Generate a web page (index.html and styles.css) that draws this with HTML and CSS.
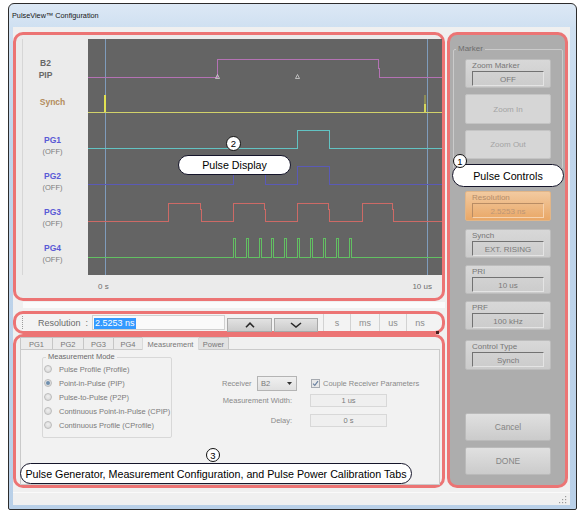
FILE: index.html
```html
<!DOCTYPE html>
<html lang="en">
<head>
<meta charset="utf-8">
<title>PulseView Configuration</title>
<link rel="stylesheet" href="styles.css">
</head>
<body>
<div class="window">
  <div class="titlebar">PulseView™ Configuration</div>
  <div class="client">
    <div class="main">
      <div class="left-col">
        <section class="box box-display">
          <div class="labels">
            <div class="lbl lbl-b2"><span>B2</span><span>PIP</span></div>
            <div class="lbl lbl-synch"><span>Synch</span></div>
            <div class="lbl lbl-pg lbl-pg1"><span>PG1</span><span class="off">(OFF)</span></div>
            <div class="lbl lbl-pg"><span>PG2</span><span class="off">(OFF)</span></div>
            <div class="lbl lbl-pg"><span>PG3</span><span class="off">(OFF)</span></div>
            <div class="lbl lbl-pg"><span>PG4</span><span class="off">(OFF)</span></div>
          </div>
          <svg class="chart" width="354" height="236" viewBox="0 0 354 236" shape-rendering="crispEdges">
            <rect width="354" height="236" fill="#646464"/>
            <line x1="17.5" y1="0" x2="17.5" y2="236" stroke="#7f9cbc"/>
            <line x1="339.5" y1="0" x2="339.5" y2="236" stroke="#7f9cbc"/>
            <path d="M0 38.5H129.5V20.5H290.5V29.5H291.5V38.5H354" stroke="#b472b4" fill="none"/>
            <path d="M129.5 35.5L131.5 39.5H127.5Z" stroke="#d2d2d2" stroke-width="0.8" fill="none" shape-rendering="auto"/>
            <path d="M209.5 35.5L211.5 39.5H207.5Z" stroke="#d2d2d2" stroke-width="0.8" fill="none" shape-rendering="auto"/>
            <path d="M0 73.5H354" stroke="#d2d26a" fill="none"/>
            <rect x="16" y="56" width="2" height="17" fill="#e2e252"/>
            <rect x="336" y="56" width="2" height="9" fill="#8c8c56"/>
            <rect x="336" y="65" width="2" height="8" fill="#d6d65c"/>
            <path d="M0 109.5H209.5V91.5H241.5V109.5H354" stroke="#62c3c3" fill="none"/>
            <path d="M0 145.5H145.5V127.5H177.5V145.5H209.5V127.5H241.5V145.5H354" stroke="#5a5ab6" fill="none"/>
            <path d="M0 182.5H80.5V164.5H112.5V170.5H113.5V182.5H145.5V164.5H176.5V170.5H177.5V182.5H209.5V164.5H240.5V170.5H241.5V182.5H274.5V164.5H304.5V170.5H305.5V182.5H354" stroke="#cd6a66" fill="none"/>
            <path d="M0 218.5H145.5V199.5H147.5V218.5H158.5V199.5H160.5V218.5H171.5V199.5H173.5V218.5H183.5V199.5H185.5V218.5H196.5V199.5H198.5V218.5H209.5V199.5H211.5V218.5H222.5V199.5H224.5V218.5H235.5V199.5H237.5V218.5H248.5V199.5H250.5V218.5H261.5V199.5H263.5V218.5H354" stroke="#62c062" fill="none"/>
          </svg>
          <div class="axis"><span>0 s</span><span>10 us</span></div>
        </section>
        <div class="gap-strip"><div class="gap-white"></div></div>
        <section class="box box-res">
          <div class="grip"></div>
          <div class="res-label">Resolution&nbsp;&nbsp;:</div>
          <div class="res-input"><span class="sel">2.5253 ns</span></div>
          <div class="arrow-btn up"><svg width="10" height="6" viewBox="0 0 10 6"><polyline points="1,5.2 5,1.2 9,5.2" fill="none" stroke="#2a2a2a" stroke-width="1.6"/></svg></div>
          <div class="arrow-btn down"><svg width="12" height="6" viewBox="0 0 12 6"><polyline points="1,1 6,5 11,1" fill="none" stroke="#2a2a2a" stroke-width="1.6"/></svg></div>
          <div class="unit u-s">s</div>
          <div class="unit u-ms">ms</div>
          <div class="unit u-us">us</div>
          <div class="unit u-ns">ns</div>
        </section>
        <section class="box box-tabs">
          <div class="tabs">
            <div class="tab t-pg1">PG1</div>
            <div class="tab t-pg2">PG2</div>
            <div class="tab t-pg3">PG3</div>
            <div class="tab t-pg4">PG4</div>
            <div class="tab t-meas active">Measurement</div>
            <div class="tab t-power">Power</div>
          </div>
          <div class="tab-panel">
            <fieldset class="mode">
              <legend>Measurement Mode</legend>
              <div class="radio"><span class="dot"></span>Pulse Profile (Profile)</div>
              <div class="radio checked"><span class="dot"></span>Point-in-Pulse (PIP)</div>
              <div class="radio"><span class="dot"></span>Pulse-to-Pulse (P2P)</div>
              <div class="radio"><span class="dot"></span>Continuous Point-in-Pulse (CPIP)</div>
              <div class="radio"><span class="dot"></span>Continuous Profile (CProfile)</div>
            </fieldset>
            <div class="recv">
              <div class="recv-row">
                <span class="recv-label">Receiver</span>
                <div class="select"><span>B2</span><svg width="5" height="3" viewBox="0 0 5 3"><path d="M0 0H5L2.5 3Z" fill="#333"/></svg></div>
                <span class="check"><svg width="7" height="7" viewBox="0 0 7 7"><polyline points="1,3.6 2.8,5.4 6,1.2" fill="none" stroke="#6a82a2" stroke-width="1.2"/></svg></span>
                <span class="check-label">Couple Receiver Parameters</span>
              </div>
              <div class="field-row mw">
                <span class="field-label">Measurement Width:</span>
                <div class="field">1 us</div>
              </div>
              <div class="field-row dl">
                <span class="field-label">Delay:</span>
                <div class="field">0 s</div>
              </div>
            </div>
          </div>
        </section>
      </div>
      <section class="box box-controls">
        <fieldset class="marker">
          <legend>Marker</legend>
          <div class="vbtn"><div class="cap">Zoom Marker</div><div class="inset">OFF</div></div>
          <div class="pbtn zin">Zoom In</div>
          <div class="pbtn zout">Zoom Out</div>
        </fieldset>
        <div class="vbtn orange v-res"><div class="cap">Resolution</div><div class="inset">2.5253 ns</div></div>
        <div class="vbtn v-synch"><div class="cap">Synch</div><div class="inset">EXT. RISING</div></div>
        <div class="vbtn v-pri"><div class="cap">PRI</div><div class="inset">10 us</div></div>
        <div class="vbtn v-prf"><div class="cap">PRF</div><div class="inset">100 kHz</div></div>
        <div class="vbtn v-ctype"><div class="cap">Control Type</div><div class="inset">Synch</div></div>
        <div class="pbtn big cancel">Cancel</div>
        <div class="pbtn big done">DONE</div>
      </section>
    </div>
    <div class="status">
      <svg class="resize-grip" width="9" height="9" viewBox="0 0 9 9">
        <rect x="7" y="1" width="1.2" height="1.2" fill="#9a9a9a"/>
        <rect x="4" y="4" width="1.2" height="1.2" fill="#9a9a9a"/>
        <rect x="7" y="4" width="1.2" height="1.2" fill="#9a9a9a"/>
        <rect x="1" y="7" width="1.2" height="1.2" fill="#9a9a9a"/>
        <rect x="4" y="7" width="1.2" height="1.2" fill="#9a9a9a"/>
        <rect x="7" y="7" width="1.2" height="1.2" fill="#9a9a9a"/>
      </svg>
    </div>
  </div>
</div>

<div class="splitter-dot"></div>

<div class="callout-pill pill-display">Pulse Display</div>
<div class="callout-num num-2">2</div>
<div class="callout-pill pill-controls">Pulse Controls</div>
<div class="callout-num num-1">1</div>
<div class="callout-num num-3">3</div>
<div class="callout-pill pill-tabs">Pulse Generator, Measurement Configuration, and Pulse Power Calibration Tabs</div>
</body>
</html>
```

FILE: styles.css
```css
* { box-sizing: border-box; }
html, body { margin: 0; }
body {
  width: 581px;
  height: 519px;
  padding: 3px 0 0 8px;
  background: #ffffff;
  font-family: "Liberation Sans", Arial, sans-serif;
  overflow: hidden;
  position: relative;
}

/* window frame */
.window {
  width: 569px;
  height: 507px;
  border: 1px solid #2c2c2c;
  border-radius: 6px 6px 2px 2px;
  background: linear-gradient(180deg, #dce8f5 0px, #cfe0f1 24px, #c0d5eb 140px, #b9d0e8 100%);
  display: flex;
  flex-direction: column;
}
.titlebar {
  height: 23px;
  padding-left: 3px;
  display: flex;
  align-items: center;
  font-size: 7.3px;
  color: #161616;
}
.client {
  flex: 1;
  margin: 0 6px 4px 4px;
  background: #f0f0f0;
  display: flex;
  flex-direction: column;
  padding-top: 5px;
}
.main {
  display: flex;
  gap: 2px;
  height: 456px;
}
.status {
  flex: 1;
  margin-top: 4px;
  border-top: 1px solid #fafafa;
  display: flex;
  justify-content: flex-end;
  align-items: flex-end;
  padding: 0 3px 1px 0;
}
.resize-grip { display: block; }

/* annotation boxes */
.box {
  border: 3px solid #ec7474;
  border-radius: 10px;
}
.left-col {
  width: 432px;
  display: flex;
  flex-direction: column;
}

/* pulse display */
.box-display {
  height: 269px;
  display: grid;
  grid-template-columns: 72px 354px;
  grid-template-rows: 236px 1fr;
  padding-top: 4px;
  background: #ebebeb;
}
.labels {
  margin-left: 6px;
  border-left: 1px solid #d6d6d6;
  padding: 18px 6px 0 0;
  display: flex;
  flex-direction: column;
}
.lbl {
  display: flex;
  flex-direction: column;
  align-items: center;
  line-height: 12px;
  font-size: 8.5px;
  font-weight: bold;
}
.lbl-b2 { color: #686868; padding-right: 14px; }
.lbl-synch { color: #b38b5d; margin-top: 15px; }
.lbl-pg { color: #5a5ad6; margin-top: 12px; }
.lbl-pg1 { margin-top: 26px; }
.off { font-weight: normal; font-size: 7.5px; color: #7c7c7c; }
.chart { display: block; }
.axis {
  grid-column: 2;
  display: flex;
  justify-content: space-between;
  align-items: center;
  padding: 0 10px;
  font-size: 8px;
  color: #6e6e6e;
}
.gap-strip { height: 10px; padding-top: 1px; }
.gap-white { height: 6px; margin-left: 10px; background: #fbfbfb; }

/* resolution toolbar */
.box-res {
  height: 23px;
  display: flex;
  align-items: center;
  background: #f3f3f3;
}
.grip {
  margin-left: 6px;
  height: 13px;
  border-left: 1px dotted #9c9c9c;
}
.res-label {
  margin-left: 15px;
  width: 54px;
  font-size: 9px;
  color: #6a6a6a;
  white-space: nowrap;
}
.res-input {
  width: 133px;
  height: 15px;
  border: 1px solid #d0d0d0;
  background: #fafafa;
  padding: 1px 0 0 1px;
  display: flex;
  align-items: center;
}
.sel {
  background: #3399ff;
  color: #ffffff;
  font-size: 9px;
  line-height: 11px;
  padding: 0 1px;
}
.arrow-btn {
  align-self: flex-end;
  margin-bottom: -1px;
  margin-left: 2px;
  height: 14px;
  border: 1px solid #a9a9a9;
  background: linear-gradient(180deg, #e2e2e2, #cbcbcb);
  display: flex;
  align-items: center;
  justify-content: center;
}
.arrow-btn svg { display: block; }
.arrow-btn.up { width: 45px; }
.arrow-btn.down { width: 44px; }
.unit {
  height: 17px;
  border-left: 1px solid #d2d2d2;
  font-size: 9px;
  color: #8c8c8c;
  display: flex;
  align-items: center;
  justify-content: center;
}
.u-s { margin-left: 5px; width: 27px; }
.u-ms { width: 29px; }
.u-us { width: 27px; }
.u-ns { width: 27px; }

/* tabs */
.box-tabs {
  height: 154px;
  padding-left: 1px;
  display: flex;
  flex-direction: column;
}
.tabs {
  display: flex;
  height: 12px;
  padding-left: 3px;
  align-items: flex-end;
}
.tab {
  height: 12px;
  border: 1px solid #c6c6c6;
  border-bottom: none;
  margin-right: -1px;
  background: #ebebeb;
  font-size: 7.5px;
  color: #777777;
  display: flex;
  align-items: center;
  justify-content: center;
  padding-top: 2px;
}
.t-pg1 { width: 33px; }
.t-pg2 { width: 32px; }
.t-pg3 { width: 31px; }
.t-pg4 { width: 30px; }
.t-meas { width: 57px; }
.t-power { width: 31px; background: #e2e2e2; }
.tab.active {
  height: 13px;
  margin-top: -1px;
  background: #f3f3f3;
  border-color: #dadada;
  padding-top: 0;
  position: relative;
  z-index: 1;
  margin-bottom: -1px;
}
.tab-panel {
  margin-left: 3px;
  width: 420px;
  flex: 1;
  border: 1px solid #cacaca;
  background: #f2f2f2;
  display: flex;
  align-items: flex-start;
  padding-top: 2px;
}
fieldset {
  margin: 0;
  padding: 0;
  min-width: 0;
}
.mode {
  margin-left: 21px;
  width: 130px;
  height: 86px;
  border: 1px solid #d8d8d8;
  border-radius: 2px;
}
.mode legend {
  margin-left: 3px;
  padding: 0 2px;
  font-size: 7.5px;
  line-height: 10px;
  color: #6a6a6a;
}
.radio {
  height: 14px;
  display: flex;
  align-items: center;
  font-size: 7.5px;
  color: #7a7a7a;
  white-space: nowrap;
}
.dot {
  width: 8px;
  height: 8px;
  margin: 0 7px 0 1px;
  border-radius: 50%;
  border: 1px solid #bcbcbc;
  background: radial-gradient(circle at 50% 40%, #f0f0f0, #d2d2d2);
  display: flex;
  align-items: center;
  justify-content: center;
}
.radio.checked .dot::after {
  content: "";
  width: 4px;
  height: 4px;
  border-radius: 50%;
  background: #6f8fae;
}
.recv {
  margin: 24px 0 0 50px;
  font-size: 7.5px;
  color: #8a8a8a;
}
.recv-row {
  height: 15px;
  display: flex;
  align-items: center;
}
.recv-label { width: 35px; }
.select {
  width: 40px;
  height: 15px;
  border: 1px solid #b4b4b4;
  background: linear-gradient(180deg, #f0f0f0, #e0e0e0);
  display: flex;
  align-items: center;
  justify-content: space-between;
  padding: 0 4px 0 3px;
  color: #777;
}
.select svg { display: block; }
.check {
  margin-left: 14px;
  width: 9px;
  height: 9px;
  border: 1px solid #a6aab0;
  background: #e8e8e8;
  display: flex;
  align-items: center;
  justify-content: center;
}
.check svg { display: block; }
.check-label { margin-left: 3px; white-space: nowrap; }
.field-row {
  display: flex;
  align-items: center;
  height: 13px;
}
.field-row.mw { margin-top: 3px; }
.field-row.dl { margin-top: 7px; }
.field-label {
  width: 70px;
  text-align: right;
  white-space: nowrap;
}
.field {
  margin-left: 18px;
  width: 77px;
  height: 13px;
  border: 1px solid #d8d8d8;
  background: #efefef;
  display: flex;
  align-items: center;
  justify-content: center;
  color: #7a7a7a;
}

/* pulse controls */
.box-controls {
  width: 121px;
  height: 456px;
  background: #adadad;
  display: flex;
  flex-direction: column;
  align-items: flex-start;
}
.marker {
  margin: 9px 0 0 3px;
  width: 110px;
  padding: 5px 0 9px 0;
  border: 1px solid #cbcbcb;
  border-radius: 2px;
}
.marker legend {
  margin-left: 2px;
  padding: 0 2px;
  font-size: 8px;
  line-height: 10px;
  color: #6c6c6c;
}
.marker > .vbtn, .marker > .pbtn { margin-left: 11px; }
.box-controls > .vbtn, .box-controls > .pbtn { margin-left: 15px; }
.vbtn {
  width: 86px;
  height: 29px;
  border: 1px solid #bdbdbd;
  border-radius: 2px;
  background: linear-gradient(180deg, #d8d8d8, #cbcbcb);
  padding: 0 6px;
}
.cap {
  height: 11px;
  line-height: 11px;
  font-size: 8px;
  color: #767676;
}
.inset {
  height: 15px;
  border-top: 1px solid #727272;
  border-left: 1px solid #727272;
  border-right: 1px solid #e4e4e4;
  border-bottom: 1px solid #e4e4e4;
  font-size: 8px;
  color: #7a7a7a;
  text-align: center;
  line-height: 16px;
  white-space: nowrap;
}
.vbtn.orange {
  background: linear-gradient(180deg, #f2caa0, #e9a766);
  border-color: #e2b688;
}
.vbtn.orange .cap { color: #b48c6a; }
.vbtn.orange .inset {
  color: #bc9676;
  border-top-color: #b88c64;
  border-left-color: #b88c64;
  border-right-color: #f6d2ae;
  border-bottom-color: #f6d2ae;
}
.pbtn {
  width: 86px;
  border: 1px solid #c4c4c4;
  border-radius: 2px;
  background: #d6d6d6;
  display: flex;
  align-items: center;
  justify-content: center;
  font-size: 8px;
  color: #a4a4a4;
}
.zin { height: 30px; margin-top: 6px; }
.zout { height: 29px; margin-top: 6px; }
.v-res { margin-top: 22px; height: 30px; }
.v-synch { margin-top: 8px; }
.v-pri { margin-top: 7px; }
.v-prf { margin-top: 7px; }
.v-ctype { margin-top: 10px; height: 30px; }
.pbtn.big {
  height: 28px;
  background: linear-gradient(180deg, #e0e0e0, #cbcbcb);
  border-color: #bababa;
  color: #858585;
  font-size: 8.5px;
}
.cancel { margin-top: 43px; }
.done { margin-top: 6px; }

/* overlays */
.splitter-dot {
  position: absolute;
  left: 436px;
  top: 331px;
  width: 3px;
  height: 3px;
  background: #4a2020;
}
.callout-pill {
  position: absolute;
  background: #ffffff;
  border: 1.5px solid #15152a;
  border-radius: 12px;
  font-size: 10.7px;
  color: #000000;
  display: flex;
  align-items: center;
  justify-content: center;
  white-space: nowrap;
}
.callout-num {
  position: absolute;
  width: 15px;
  height: 15px;
  border: 1.3px solid #111111;
  border-radius: 50%;
  background: #ffffff;
  font-size: 9.5px;
  color: #000000;
  display: flex;
  align-items: center;
  justify-content: center;
}
.pill-display { left: 178px; top: 155px; width: 113px; height: 20px; }
.num-2 { left: 226px; top: 136px; }
.pill-controls { left: 452px; top: 164px; width: 112px; height: 23px; }
.num-1 { left: 453px; top: 154px; width: 14px; height: 14px; }
.num-3 { left: 206px; top: 448px; width: 14px; height: 14px; }
.pill-tabs { left: 20px; top: 463px; width: 392px; height: 21px; }
```
